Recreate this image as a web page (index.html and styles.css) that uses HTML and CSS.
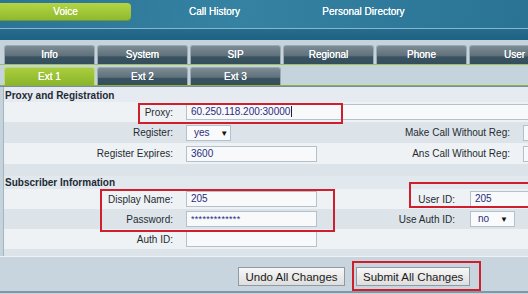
FILE: index.html
```html
<!DOCTYPE html>
<html lang="en">
  <head>
    <meta charset="UTF-8" />
    <title>Voice - Ext 1</title>
    <link rel="stylesheet" href="styles.css">
  </head>
  <body>
    <div class="page">
      <div class="topnav">
        <div class="nav-list">
          <div class="nav-item active">Voice</div>
          <div class="nav-item">Call History</div>
          <div class="nav-item">Personal Directory</div>
        </div>
      </div>
      <div class="subband"></div>
      <div class="tabarea">
        <div class="tab-row">
          <div class="tab">Info</div>
          <div class="tab">System</div>
          <div class="tab">SIP</div>
          <div class="tab">Regional</div>
          <div class="tab">Phone</div>
          <div class="tab">User</div>
        </div>
        <div class="tab-line thin"></div>
        <div class="tab-row second">
          <div class="tab on">Ext 1</div>
          <div class="tab">Ext 2</div>
          <div class="tab">Ext 3</div>
        </div>
        <div class="tab-line"></div>
      </div>

      <div class="content">
        <div class="sec-title">Proxy and Registration</div>
        <div class="row sec1 light">
          <div class="lbl">Proxy:</div>
          <div></div>
          <div class="field wide">60.250.118.200:30000<span class="caret"></span></div>
        </div>
        <div class="row sec1 dark tall">
          <div class="lbl">Register:</div>
          <div></div>
          <div class="select">yes <span class="arrow">&#9660;</span></div>
          <div class="lbl">Make Call Without Reg:</div>
          <div></div>
          <div class="field"></div>
        </div>
        <div class="row sec1 light tall">
          <div class="lbl">Register Expires:</div>
          <div></div>
          <div class="field">3600</div>
          <div class="lbl">Ans Call Without Reg:</div>
          <div></div>
          <div class="field"></div>
        </div>
        <div class="spacer dark"></div>

        <div class="sec-title sub">Subscriber Information</div>
        <div class="row sec2 light">
          <div class="lbl">Display Name:</div>
          <div></div>
          <div class="field">205</div>
          <div class="lbl">User ID:</div>
          <div></div>
          <div class="field">205</div>
        </div>
        <div class="row sec2 dark">
          <div class="lbl">Password:</div>
          <div></div>
          <div class="field pass">*************</div>
          <div class="lbl">Use Auth ID:</div>
          <div></div>
          <div class="select">no <span class="arrow">&#9660;</span></div>
        </div>
        <div class="row sec2 light">
          <div class="lbl">Auth ID:</div>
          <div></div>
          <div class="field"></div>
        </div>
        <div class="spacer short dark"></div>
      </div>

      <div class="footer">
        <button class="btn undo">Undo All Changes</button>
        <button class="btn">Submit All Changes</button>
      </div>

      <!-- highlight boxes drawn over the form -->
      <div class="mark mark-proxy"></div>
      <div class="mark mark-name"></div>
      <div class="mark mark-user"></div>
      <div class="mark mark-submit"></div>
    </div>
  </body>
</html>
```

FILE: styles.css
```css
* {
  margin: 0;
  padding: 0;
  box-sizing: border-box;
}
body {
  width: 528px;
  height: 294px;
  overflow: hidden;
  background: #c5d3dd;
  font-family: "Liberation Sans", Arial, sans-serif;
  font-size: 10px;
  color: #262b30;
}
.page {
  position: relative;
  width: 528px;
  height: 294px;
  overflow: hidden;
}
.topnav {
  height: 29px;
  padding-top: 3px;
  background: linear-gradient(100deg, #2c7495 0%, #3582a3 45%, #2a7394 100%);
  border-bottom: 1px solid #86b6cc;
}
.nav-list {
  display: flex;
  gap: 18px;
}
.nav-item {
  width: 131px;
  height: 17px;
  line-height: 17px;
  text-align: center;
  color: #fff;
  text-shadow: 0 0 0.6px #fff;
}
.nav-item.active {
  background: linear-gradient(#b4d544, #8fba2d);
  border-radius: 0 4px 4px 0;
  box-shadow: 0 1px 0 #6f9a2a;
}
.subband {
  height: 11px;
  background: linear-gradient(#256c8e, #1f6283);
}
.tabarea {
  padding-top: 5px;
  background: #c5d3dd;
}
.tab-row {
  display: flex;
  gap: 2px;
  height: 19px;
  padding-left: 4px;
  overflow: hidden;
}
.tab-row.second {
  height: 18px;
  margin-top: 2px;
}
.tab {
  flex: none;
  width: 91px;
  height: 100%;
  line-height: 17px;
  text-align: center;
  color: #fff;
  text-shadow: 0 0 0.6px #fff;
  border: 1px solid #9aa9b2;
  border-bottom: none;
  border-radius: 3px 3px 0 0;
  background: linear-gradient(#7d8c95 0%, #5f707a 55%, #3a5362 60%, #344e5c 100%);
}
.tab.on {
  border-color: #bcd975;
  background: linear-gradient(#aacd3d, #8bb52c);
}
.tab-line {
  height: 2px;
  background: #8db23f;
  border-bottom: 1px solid #7a8d98;
}
.tab-line.thin {
  height: 1px;
  border-bottom: none;
  background: #9dbf57;
}
.content {
  margin-left: 3px;
  border-left: 1px solid #a4b5c1;
  background: #e6ecf0;
  overflow: hidden;
}
.sec-title {
  height: 15px;
  line-height: 17px;
  padding-left: 1px;
  font-weight: bold;
  color: #1e2a33;
  background: #e5ebf0;
}
.sec-title.sub {
  height: 13px;
  line-height: 13px;
  background: #e1e8ee;
}
.row {
  display: grid;
  align-items: center;
  height: 20px;
  white-space: nowrap;
}
.row.tall {
  height: 21px;
}
.sec1 {
  grid-template-columns: 171px 11px 131px 195px 11px 80px;
}
.sec2 {
  grid-template-columns: 171px 11px 131px 140px 13px 80px;
}
.light {
  background: #eef2f5;
}
.dark {
  background: #dce4ea;
}
.lbl {
  text-align: right;
  padding-right: 2px;
}
.field {
  height: 16px;
  line-height: 14px;
  padding-left: 4px;
  border: 1px solid #b4c1cb;
  background: #f7f9fb;
  color: #2b2c7c;
}
.field.wide {
  width: 360px;
}
.field.pass {
  font-size: 9px;
  letter-spacing: 0.3px;
}
.caret {
  display: inline-block;
  width: 1px;
  height: 11px;
  margin-left: 1px;
  vertical-align: -2px;
  background: #222;
}
.select {
  width: 45px;
  height: 16px;
  line-height: 14px;
  padding-left: 7px;
  border: 1px solid #b4c1cb;
  background: #f9fafb;
  color: #2b2c7c;
}
.arrow {
  margin-left: 8px;
  font-size: 8px;
  color: #111;
}
.spacer {
  height: 12px;
}
.spacer.short {
  height: 7px;
}
.footer {
  display: flex;
  gap: 11px;
  height: 37px;
  padding: 10px 0 0 238px;
  border-top: 1px solid #eef2f5;
  border-bottom: 2px solid #8097a7;
  background: #c8d5de;
}
.btn {
  height: 19px;
  padding: 0 6px;
  font-family: "Liberation Sans", Arial, sans-serif;
  font-size: 11.5px;
  color: #1a1a1a;
  border: 1px solid #8f9aa2;
  background: linear-gradient(#f7f7f7, #dedede);
}
.btn.undo {
  width: 107px;
}
.mark {
  position: absolute;
  border: 2px solid #cf1f2d;
}
.mark-proxy {
  left: 138px;
  top: 103px;
  width: 205px;
  height: 21px;
}
.mark-name {
  left: 100px;
  top: 189px;
  width: 235px;
  height: 43px;
}
.mark-user {
  left: 409px;
  top: 182px;
  width: 140px;
  height: 26px;
}
.mark-submit {
  left: 352px;
  top: 261px;
  width: 129px;
  height: 30px;
}
```
